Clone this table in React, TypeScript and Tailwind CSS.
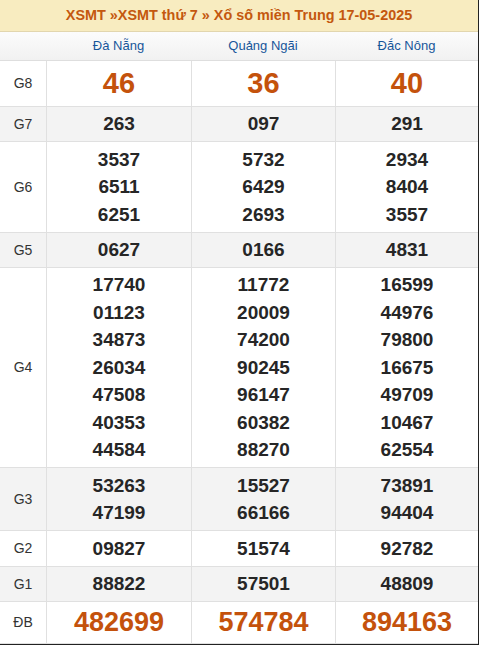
const PROVINCES = ['Đà Nẵng', 'Quảng Ngãi', 'Đắc Nông']

type Row = { label: string; h: string; big?: boolean; gray?: boolean; size?: string; nums: string[][] }

const ROWS: Row[] = [
  { label: 'G8', h: 'h-[46px]', big: true, size: 'text-[29px]', nums: [['46'], ['36'], ['40']] },
  { label: 'G7', h: 'h-[35px]', gray: true, nums: [['263'], ['097'], ['291']] },
  { label: 'G6', h: 'h-[91px]', nums: [['3537', '6511', '6251'], ['5732', '6429', '2693'], ['2934', '8404', '3557']] },
  { label: 'G5', h: 'h-[35px]', gray: true, nums: [['0627'], ['0166'], ['4831']] },
  {
    label: 'G4', h: 'h-[200px]', nums: [
      ['17740', '01123', '34873', '26034', '47508', '40353', '44584'],
      ['11772', '20009', '74200', '90245', '96147', '60382', '88270'],
      ['16599', '44976', '79800', '16675', '49709', '10467', '62554'],
    ],
  },
  { label: 'G3', h: 'h-[63px]', gray: true, nums: [['53263', '47199'], ['15527', '66166'], ['73891', '94404']] },
  { label: 'G2', h: 'h-[36px]', nums: [['09827'], ['51574'], ['92782']] },
  { label: 'G1', h: 'h-[35px]', gray: true, nums: [['88822'], ['57501'], ['48809']] },
  { label: 'ĐB', h: 'h-[42px]', big: true, size: 'text-[27px]', nums: [['482699'], ['574784'], ['894163']] },
]

const COLS = ['w-[145px]', 'w-[144px]', 'w-[143px]']

export default function App() {
  return (
    <div className="w-[479px] bg-white border-r border-b border-[#222] font-['Liberation_Sans',Arial,sans-serif]">
      {/* tiêu đề */}
      <div className="h-[32px] bg-[#f8ecc0] border-b border-[#e2d6ae] flex items-center justify-center text-[14.4px] font-bold text-[#c4580f]">
        XSMT »XSMT thứ 7 » Xổ số miền Trung 17-05-2025
      </div>

      {/* tỉnh */}
      <div className="h-[29px] flex border-b border-[#dedede] bg-gradient-to-b from-[#fcfcfc] to-[#f1f1f1]">
        <div className="w-[46px]" />
        {PROVINCES.map((p, i) => (
          <div key={p} className={`${COLS[i]} flex items-center justify-center text-[13px] text-[#17569a]`}>{p}</div>
        ))}
      </div>

      {ROWS.map((r) => (
        <div key={r.label} className={`${r.h} flex border-b border-[#e0e0e0] ${r.gray ? 'bg-[#f3f3f3]' : 'bg-white'}`}>
          <div className="w-[46px] shrink-0 flex items-center justify-center text-[14px] text-[#333]">{r.label}</div>
          {r.nums.map((col, i) => (
            <div key={i} className={`${COLS[i]} shrink-0 border-l border-[#e0e0e0] flex flex-col items-center justify-center font-bold`}>
              {col.map((n, j) => (
                <div key={j} className={r.big ? `${r.size} leading-none text-[#c4520c]` : 'text-[19px] leading-[27.5px] text-[#262626]'}>{n}</div>
              ))}
            </div>
          ))}
        </div>
      ))}
    </div>
  )
}
